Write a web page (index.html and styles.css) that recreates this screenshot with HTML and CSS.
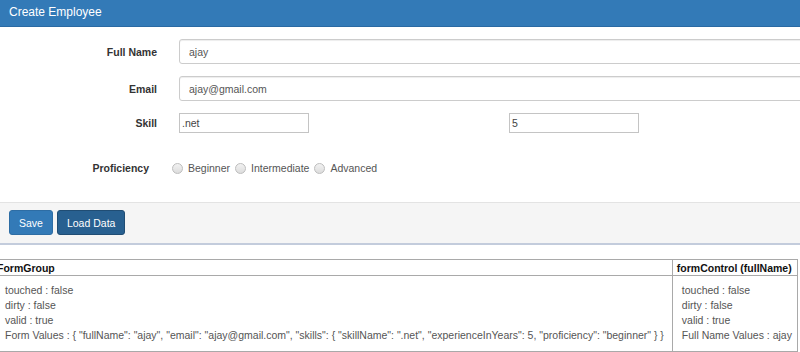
FILE: index.html
```html
<!DOCTYPE html>
<html lang="en">
<head>
  <meta charset="UTF-8">
  <meta name="viewport" content="width=device-width, initial-scale=1.0">
  <title>Create Employee</title>
  <link rel="stylesheet" href="styles.css">
</head>
<body>

  <!-- Employee form panel -->
  <div class="panel">
    <div class="panel-heading">Create Employee</div>

    <div class="panel-body">
      <div class="form-row">
        <label class="row-label">Full Name</label>
        <input class="form-control" type="text" value="ajay">
      </div>

      <div class="form-row">
        <label class="row-label">Email</label>
        <input class="form-control" type="text" value="ajay@gmail.com">
      </div>

      <div class="form-row skill-row">
        <label class="row-label">Skill</label>
        <div class="skill-col"><input class="plain-input" type="text" value=".net"></div>
        <div class="skill-col"><input class="plain-input" type="text" value="5"></div>
      </div>

      <div class="form-row radio-row">
        <label class="row-label short">Proficiency</label>
        <div class="radio-list">
          <label class="radio-item"><span class="radio"></span>Beginner</label>
          <label class="radio-item"><span class="radio"></span>Intermediate</label>
          <label class="radio-item"><span class="radio"></span>Advanced</label>
        </div>
      </div>
    </div>

    <div class="panel-footer">
      <button class="btn btn-primary">Save</button>
      <button class="btn btn-dark">Load Data</button>
    </div>
  </div>

  <!-- Form state debug table -->
  <table class="state-table">
    <tr>
      <th>FormGroup</th>
      <th class="control-col">formControl (fullName)</th>
    </tr>
    <tr>
      <td>
        touched : false<br>
        dirty : false<br>
        valid : true<br>
        Form Values : { "fullName": "ajay", "email": "ajay@gmail.com", "skills": { "skillName": ".net", "experienceInYears": 5, "proficiency": "beginner" } }
      </td>
      <td class="control-col">
        touched : false<br>
        dirty : false<br>
        valid : true<br>
        Full Name Values : ajay
      </td>
    </tr>
  </table>

</body>
</html>
```

FILE: styles.css
```css
body {
  font-family: 'Liberation Sans', Arial, sans-serif;
  font-size: 10.5px;
  color: #333;
  margin: 0;
  padding: 0;
  background-color: #fff;
  overflow: hidden;
}

.panel {
  width: 830px;
}

.panel-heading {
  height: 26px;
  line-height: 25px;
  padding-left: 9px;
  background-color: #337ab7;
  border-bottom: 1px solid #2a6aa3;
  color: white;
  font-size: 12px;
}

.panel-body {
  padding: 0 0 24px 0;
}

.form-row {
  display: flex;
  align-items: center;
  margin-top: 12px;
  height: 25px;
}

.row-label {
  width: 157px;
  margin-right: 22px;
  text-align: right;
  font-weight: bold;
  color: #333;
  flex-shrink: 0;
}

.row-label.short {
  width: 149px;
  margin-right: 23px;
}

.form-control {
  flex: 1;
  height: 25px;
  box-sizing: border-box;
  padding: 0 9px;
  border: 1px solid #ccc;
  border-radius: 3px;
  box-shadow: inset 0 1px 1px rgba(0, 0, 0, 0.075);
  font-family: inherit;
  font-size: 10.5px;
  color: #555;
}

.skill-row {
  height: 20px;
}

.skill-col {
  width: 330px;
  flex-shrink: 0;
}

.plain-input {
  width: 130px;
  height: 20px;
  box-sizing: border-box;
  padding: 0 2px;
  border: 1px solid #c4c4c4;
  border-radius: 0;
  font-family: inherit;
  font-size: 10.5px;
  color: #444;
}

.radio-row {
  margin-top: 25px;
  height: 20px;
}

.radio-list {
  display: flex;
  align-items: center;
  color: #555;
}

.radio-item {
  display: flex;
  align-items: center;
  margin-right: 5px;
}

.radio {
  width: 9px;
  height: 9px;
  margin-right: 5px;
  border: 1px solid #bdbdbd;
  border-radius: 50%;
  background: linear-gradient(#f2f2f2, #dcdcdc);
}

.panel-footer {
  display: flex;
  gap: 4px;
  padding: 7px 9px 8px 9px;
  background-color: #f5f5f5;
  border-top: 1px solid #e3e3e3;
  border-bottom: 2px solid #c3ccdc;
}

.btn {
  height: 25px;
  padding: 0 9px;
  border-radius: 3px;
  font-family: inherit;
  font-size: 10.5px;
  color: white;
  cursor: pointer;
}

.btn-primary {
  background-color: #337ab7;
  border: 1px solid #2e6da4;
}

.btn-dark {
  background-color: #286090;
  border: 1px solid #204d74;
}

.state-table {
  margin-top: 14px;
  margin-left: -6px;
  width: 804px;
  border-collapse: collapse;
  color: #555;
}

.state-table th,
.state-table td {
  border: 1px solid #a9a9a9;
  text-align: left;
  white-space: nowrap;
}

.state-table th {
  height: 15px;
  padding: 0 3px 0 2px;
  color: #111;
  font-weight: bold;
}

.state-table td {
  padding: 7px 2px 8px 10px;
  line-height: 15px;
}

.state-table th.control-col {
  padding-left: 4px;
}

.state-table td.control-col {
  padding-left: 9px;
  padding-right: 4px;
}
```
